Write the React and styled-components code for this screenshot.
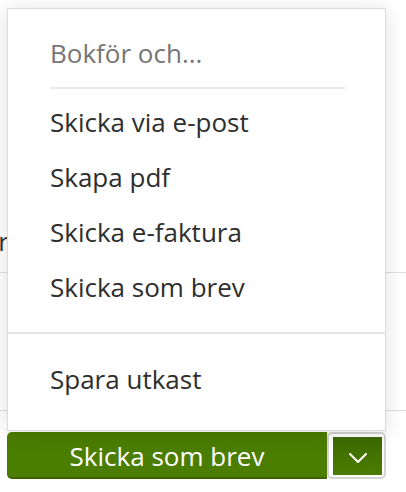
import React from "react";
import styled, { createGlobalStyle } from "styled-components";

const Global = createGlobalStyle`
  html, body { margin: 0; padding: 0; background: #ffffff; }
  body { font-family: "Open Sans", "Liberation Sans", sans-serif; -webkit-font-smoothing: antialiased; }
  * { box-sizing: border-box; }
`;

const Page = styled.div`
  position: relative;
  width: 406px;
  height: 492px;
  overflow: hidden;
  display: flex;
  flex-direction: column;
  background: #fff;
`;

const FormArea = styled.div`
  height: 273px;
  padding-top: 224px;
  border-bottom: 1px solid #dedede;
`;

const FieldRow = styled.div`
  display: flex;
`;

const LabelCell = styled.div`
  width: 9px;
  overflow: hidden;
  display: flex;
  justify-content: flex-end;
  white-space: nowrap;
  font-size: 26px;
  line-height: 35px;
  color: #333;
`;

const Spacer = styled.div`
  flex: 1;
`;

const Footer = styled.div`
  border-top: 1px solid #dedede;
  padding: 21px 0 13px 7px;
  display: flex;
`;

const MainButton = styled.button`
  width: 320px;
  height: 47px;
  padding: 4px 0 0;
  border: none;
  border-bottom: 2px solid #3a6400;
  border-radius: 5px 0 0 5px;
  background: #4b7d00;
  color: #fff;
  font-family: inherit;
  font-size: 26px;
  line-height: 41px;
  text-align: center;
  cursor: pointer;
`;

const ToggleRing = styled.div`
  width: 59px;
  height: 47px;
  border: 2px solid #d4d4d4;
  border-radius: 5px;
  padding: 3px 2px 2px 4px;
  background: #fff;
  display: flex;
`;

const ToggleFill = styled.button`
  flex: 1;
  border: none;
  padding: 0;
  background: linear-gradient(#3d6a00, #4b7c00);
  display: flex;
  align-items: center;
  justify-content: center;
  cursor: pointer;
`;

const Menu = styled.div`
  position: absolute;
  left: 7px;
  top: 8px;
  width: 379px;
  background: #fff;
  border: 1px solid #dcdcdc;
  box-shadow: 0 2px 18px rgba(0, 0, 0, 0.13);
  padding: 17px 0 23px;
  display: flex;
  flex-direction: column;
`;

const MenuHeader = styled.div`
  padding: 0 42px;
  font-size: 26px;
  line-height: 55px;
  color: #767676;
`;

const HeaderRule = styled.div`
  margin: 6px 40px 6px 42px;
  height: 2px;
  background: #e8e8e8;
`;

const MenuItem = styled.div`
  padding: 0 42px;
  font-size: 26px;
  line-height: 55px;
  color: #2e2e2e;
  white-space: nowrap;
  cursor: pointer;
`;

const FullRule = styled.div`
  margin: 17px 0 18px;
  height: 2px;
  background: #e6e6e6;
`;

const Chevron = () => (
  <svg width="20" height="12" viewBox="0 0 20 12" fill="none" style={{ marginTop: 3 }}>
    <path d="M2 2 L10 10 L18 2" stroke="#ffffff" strokeWidth="2" strokeLinecap="round" strokeLinejoin="round" />
  </svg>
);

const items = ["Skicka via e-post", "Skapa pdf", "Skicka e-faktura", "Skicka som brev"];

export default function App() {
  return (
    <>
      <Global />
      <Page>
        <FormArea>
          <FieldRow>
            <LabelCell>Mottagar</LabelCell>
          </FieldRow>
        </FormArea>
        <Spacer />
        <Footer>
          <MainButton>Skicka som brev</MainButton>
          <ToggleRing>
            <ToggleFill aria-label="Fler val">
              <Chevron />
            </ToggleFill>
          </ToggleRing>
        </Footer>
        <Menu>
          <MenuHeader>Bokför och...</MenuHeader>
          <HeaderRule />
          {items.map((t) => (
            <MenuItem key={t}>{t}</MenuItem>
          ))}
          <FullRule />
          <MenuItem>Spara utkast</MenuItem>
        </Menu>
      </Page>
    </>
  );
}
